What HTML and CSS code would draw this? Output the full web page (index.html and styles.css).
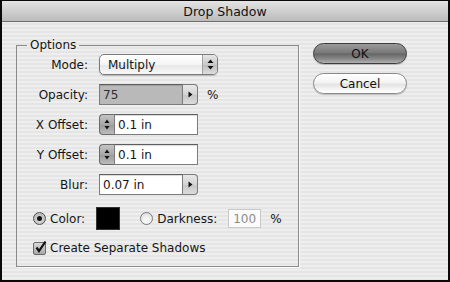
FILE: index.html
```html
<!DOCTYPE html>
<html>
<head>
<meta charset="UTF-8">
<title>Drop Shadow</title>
<link rel="stylesheet" href="styles.css">
</head>
<body>
<div class="dialog">
	<div class="titlebar">Drop Shadow</div>
	<div class="content">
		<fieldset class="options">
			<legend>Options</legend>

			<div class="row first">
				<span class="lbl">Mode:</span>
				<div class="popup">
					<span class="popup-text">Multiply</span>
					<span class="popup-arrows">
						<svg width="7" height="11" viewBox="0 0 7 11"><polygon points="3.5,0.5 6.5,4 0.5,4" fill="#111"/><polygon points="0.5,7 6.5,7 3.5,10.5" fill="#111"/></svg>
					</span>
				</div>
			</div>

			<div class="row">
				<span class="lbl">Opacity:</span>
				<div class="combo">
					<span class="field disabled">75</span>
					<span class="arrowbtn"><svg width="5" height="7" viewBox="0 0 5 7"><polygon points="0.5,0.5 4.5,3.5 0.5,6.5" fill="#111"/></svg></span>
				</div>
				<span class="unit">%</span>
			</div>

			<div class="row">
				<span class="lbl">X Offset:</span>
				<div class="spinbox">
					<span class="stepper"><svg width="6" height="11" viewBox="0 0 6 11"><polygon points="3,0.5 5.5,4 0.5,4" fill="#111"/><polygon points="0.5,7 5.5,7 3,10.5" fill="#111"/></svg></span>
					<span class="field">0.1 in</span>
				</div>
			</div>

			<div class="row">
				<span class="lbl">Y Offset:</span>
				<div class="spinbox">
					<span class="stepper"><svg width="6" height="11" viewBox="0 0 6 11"><polygon points="3,0.5 5.5,4 0.5,4" fill="#111"/><polygon points="0.5,7 5.5,7 3,10.5" fill="#111"/></svg></span>
					<span class="field">0.1 in</span>
				</div>
			</div>

			<div class="row">
				<span class="lbl">Blur:</span>
				<div class="combo">
					<span class="field">0.07 in</span>
					<span class="arrowbtn"><svg width="5" height="7" viewBox="0 0 5 7"><polygon points="0.5,0.5 4.5,3.5 0.5,6.5" fill="#111"/></svg></span>
				</div>
			</div>

			<div class="color-row">
				<span class="radio checked"></span>
				<span class="radio-label">Color:</span>
				<span class="swatch"></span>
				<span class="radio"></span>
				<span class="radio-label">Darkness:</span>
				<span class="small-field">100</span>
				<span class="unit">%</span>
			</div>

			<div class="check-row">
				<span class="checkbox">
					<svg width="15" height="15" viewBox="0 0 15 15"><path d="M3.5 7.5 L6 11 L12.5 1.5" fill="none" stroke="#111" stroke-width="2.2"/></svg>
				</span>
				<span>Create Separate Shadows</span>
			</div>
		</fieldset>

		<div class="buttons">
			<button class="btn default">OK</button>
			<button class="btn">Cancel</button>
		</div>
	</div>
</div>
</body>
</html>
```

FILE: styles.css
```css
body
{
	margin:0px;
	padding:0px;
	background-color:black;
	font-family:"DejaVu Sans", sans-serif;
	font-size:12px;
	color:#151515;
}

.dialog
{
	width:450px;
	height:282px;
	box-sizing:border-box;
	border:2px solid #0a0a0a;
	border-top-width:1px;
	display:flex;
	flex-direction:column;
	background:repeating-linear-gradient(to bottom, #eeeeee 0px, #eeeeee 2px, #e5e5e5 2px, #e5e5e5 4px);
}

.titlebar
{
	flex:none;
	height:20px;
	display:flex;
	align-items:center;
	justify-content:center;
	font-size:12.5px;
	color:#111;
	background:linear-gradient(#e4e4e4, #cfcfcf 50%, #bcbcbc);
	border-bottom:1px solid #6e6e6e;
}

.content
{
	flex:1;
	display:flex;
	align-items:flex-start;
	padding:16px 0px 0px 14px;
	gap:14px;
}

.options
{
	margin:0px;
	padding:0px 0px 11px 0px;
	width:283px;
	box-sizing:border-box;
	border:1px solid #8a8a8a;
	box-shadow:1px 1px 0px #fafafa;
}

.options legend
{
	margin-left:10px;
	padding:0px 3px;
	line-height:14px;
}

.row
{
	display:flex;
	align-items:center;
	height:21px;
	margin-top:9px;
}

.row.first
{
	margin-top:2px;
}

.lbl
{
	flex:none;
	width:71px;
	margin-right:11px;
	text-align:right;
}

/* popup menu */
.popup
{
	width:119px;
	height:21px;
	box-sizing:border-box;
	display:flex;
	align-items:stretch;
	border:1px solid #7a7a7a;
	border-radius:5px;
	background:linear-gradient(#ffffff, #f4f4f4 50%, #e6e6e6 52%, #f8f8f8);
	box-shadow:0px 1px 1px rgba(0,0,0,0.2);
	overflow:hidden;
}

.popup-text
{
	display:flex;
	align-items:center;
	padding-left:8px;
	flex:1;
}

.popup-arrows
{
	width:14px;
	display:flex;
	align-items:center;
	justify-content:center;
	border-left:1px solid #a0a0a0;
	background:linear-gradient(#e6e6e6, #c9c9c9 50%, #bcbcbc 52%, #dedede);
}

/* combo field with arrow */
.combo, .spinbox
{
	display:flex;
	height:21px;
}

.field
{
	box-sizing:border-box;
	width:84px;
	height:21px;
	display:flex;
	align-items:center;
	padding-left:3px;
	background-color:white;
	border:1px solid #7c7c7c;
	border-top-color:#5e5e5e;
	box-shadow:inset 0px 1px 1px rgba(0,0,0,0.15);
}

.field.disabled
{
	background-color:#b9b9b9;
	color:#303030;
}

.arrowbtn
{
	box-sizing:border-box;
	width:15px;
	height:21px;
	display:flex;
	align-items:center;
	justify-content:center;
	border:1px solid #7a7a7a;
	border-left:none;
	border-radius:0px 4px 4px 0px;
	background:linear-gradient(#e8e8e8, #d4d4d4 50%, #c6c6c6 52%, #dcdcdc);
}

.stepper
{
	box-sizing:border-box;
	width:15px;
	height:21px;
	display:flex;
	align-items:center;
	justify-content:center;
	border:1px solid #6a6a6a;
	border-right:none;
	border-radius:4px 0px 0px 4px;
	background:linear-gradient(#c4c4c4, #a8a8a8 50%, #9a9a9a 52%, #bcbcbc);
}

.spinbox .field
{
	width:84px;
}

.unit
{
	margin-left:9px;
}

/* color row */
.color-row
{
	display:flex;
	align-items:center;
	height:23px;
	margin-top:12px;
	padding-left:16px;
}

.radio
{
	flex:none;
	width:13px;
	height:13px;
	box-sizing:border-box;
	border:1px solid #7a7a7a;
	border-radius:50%;
	background:radial-gradient(circle at 50% 70%, #ffffff, #e4e4e4 70%, #cfcfcf);
	margin-right:4px;
	display:flex;
	align-items:center;
	justify-content:center;
}

.radio.checked
{
	background:radial-gradient(circle at 50% 60%, #e2e2e2, #b4b4b4 80%);
	border-color:#555;
}

.radio.checked::after
{
	content:"";
	width:5px;
	height:5px;
	border-radius:50%;
	background-color:#111;
}

.radio-label
{
	margin-right:11px;
}

.swatch
{
	width:24px;
	height:23px;
	box-sizing:border-box;
	background-color:#000;
	border:1px solid #333;
	margin-right:20px;
}

.small-field
{
	box-sizing:border-box;
	width:33px;
	height:19px;
	display:flex;
	align-items:center;
	padding-left:4px;
	background-color:#fbfbfb;
	border:1px solid #c9c9c9;
	color:#8c8c8c;
}

/* checkbox row */
.check-row
{
	display:flex;
	align-items:center;
	height:14px;
	margin-top:11px;
	padding-left:16px;
}

.checkbox
{
	position:relative;
	flex:none;
	width:13px;
	height:13px;
	box-sizing:border-box;
	border:1px solid #6a6a6a;
	border-radius:2px;
	background:linear-gradient(#d8d8d8, #a9a9a9);
	margin-right:4px;
}

.checkbox svg
{
	position:absolute;
	left:-1px;
	top:-3px;
}

/* buttons */
.buttons
{
	display:flex;
	flex-direction:column;
	gap:9px;
	margin-top:5px;
}

.btn
{
	width:94px;
	height:21px;
	box-sizing:border-box;
	border:1px solid #8a8a8a;
	border-radius:11px;
	font-family:"DejaVu Sans", sans-serif;
	font-size:12px;
	color:#111;
	padding:0px;
	background:linear-gradient(#ffffff, #f3f3f3 48%, #e2e2e2 52%, #f7f7f7 85%, #ffffff);
	box-shadow:0px 1px 1px rgba(0,0,0,0.2);
}

.btn.default
{
	border-color:#3c3c3c;
	background:linear-gradient(#9a9a9a, #7a7a7a 45%, #666666 52%, #8a8a8a 80%, #b2b2b2);
}
```
